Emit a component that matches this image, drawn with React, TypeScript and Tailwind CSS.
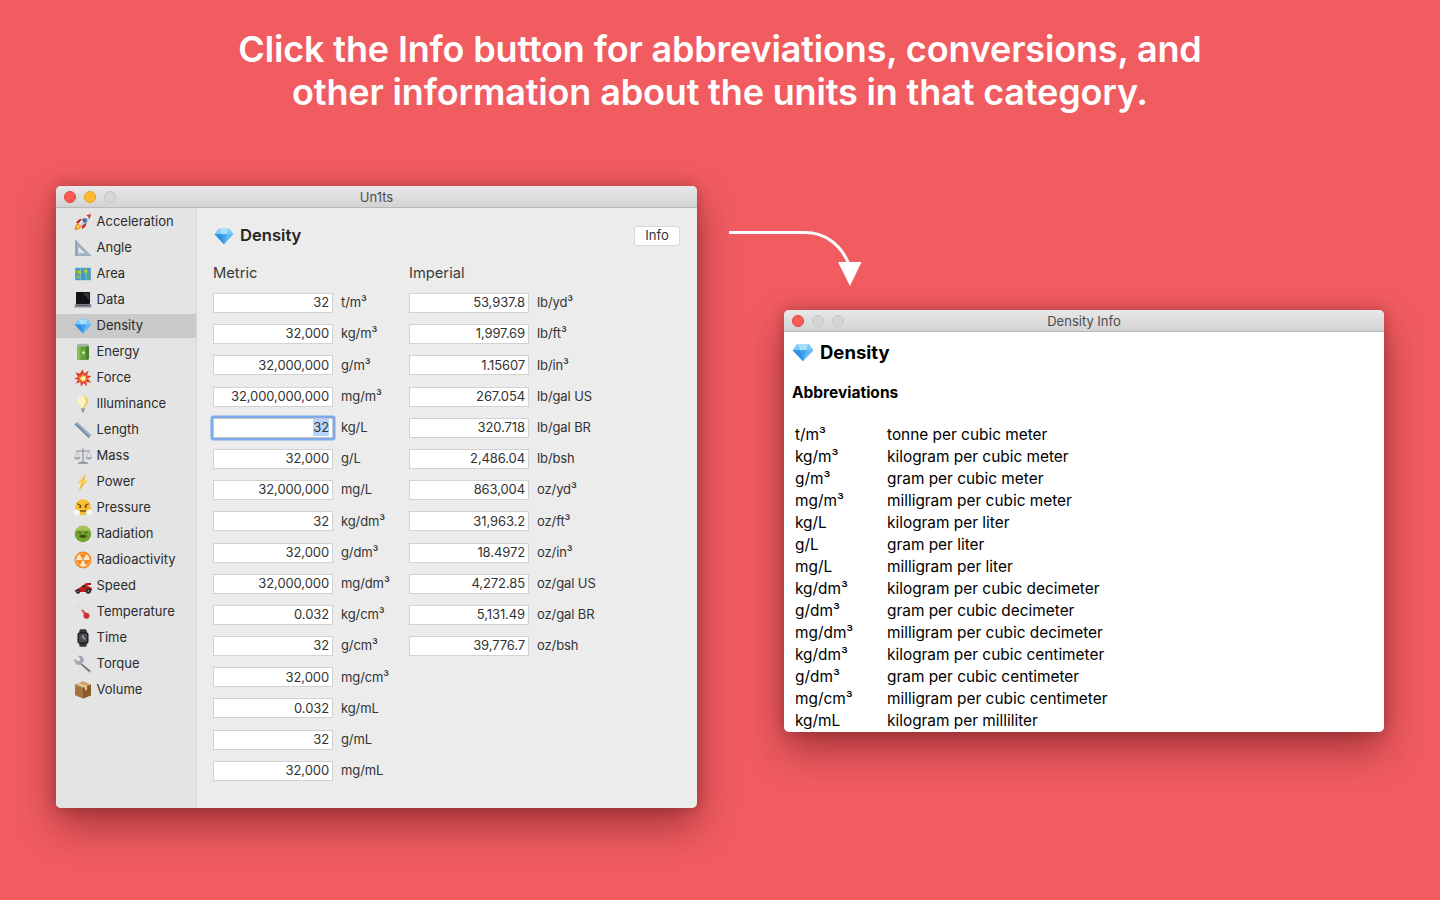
import type { ReactNode } from 'react'

const Svg = ({ children, size = 18 }: { children: ReactNode; size?: number }) => (
  <svg width={size} height={size} viewBox="0 0 18 18" className="shrink-0">
    {children}
  </svg>
)

const Diamond = ({ size = 18 }: { size?: number }) => (
  <Svg size={size}>
    <path d="M4.500 2.500h9l4 5L9 16.500.5 7.500z" fill="#5db8f5" />
    <path d="M4.500 2.500h9l-2 5h-5z" fill="#a5e0fd" />
    <path d="M.5 7.500l4-5 2 5zM17.500 7.500l-4-5-2 5z" fill="#7acbf9" />
    <path d="M6.500 7.500h5L9 16.500z" fill="#3f9fec" />
    <path d="M.5 7.500h6L9 16.500z" fill="#2f8fe0" />
  </Svg>
)

const icons: Record<string, ReactNode> = {
  Acceleration: (
    <Svg>
      <path d="M.8 17c-.2-3.500 1-6 3.500-6.800l3 3C6.500 15.800 4 17.200.8 17z" fill="#f0881d" />
      <path d="M2.600 15.300c0-1.800.7-3 1.900-3.600l1.500 1.500c-.5 1.300-1.600 2-3.400 2.100z" fill="#fde047" />
      <path d="M4.300 10C6.500 5.500 11 1.800 17 1c-.7 6-4.500 10.500-9 12.800z" fill="#c4cad3" />
      <path d="M4.300 10C6.500 5.500 11 1.800 17 1L6 12z" fill="#e8ebef" />
      <path d="M12 2.300c1.300.3 3.200 2.200 3.700 3.700L17 1z" fill="#d8342c" />
      <circle cx="10.700" cy="7.300" r="1.900" fill="#2f6fb5" stroke="#5b6472" strokeWidth=".7" />
      <path d="M4.800 6.500 8.500 5.800 4.500 10.500 1.800 10zM11.700 13l.8-3.700-4.700 4 .6 3z" fill="#c62a26" />
    </Svg>
  ),
  Angle: (
    <Svg>
      <path fillRule="evenodd" d="M1.500.8V17h16.200zM4.300 7.500V14.300h6.800z" fill="#9fb0c4" />
      <path d="M1.500.8V17h1.200V2.200z" fill="#7f92aa" />
    </Svg>
  ),
  Area: (
    <Svg>
      <rect x=".5" y="2" width="17" height="14" fill="#dfe6ea" />
      <rect x="1.200" y="2.800" width="15.600" height="12.400" fill="#3f9cc4" />
      <path d="M2 5h4.500l1.500 2.500-2 3.500-1.500-1.500L2 8zM9 4l5.500.5-.5 3.500-2.500 3-1-3-1.500-1zM13 11l2.800-.5-.5 3-2.300.5z" fill="#7fae42" />
      <path d="M4 6.500l2 .8M10.500 5.500l2.500 1.500M3.500 11l1.500 2" stroke="#f0c93f" strokeWidth="1.300" />
      <path d="M6.500 2.800v12.400M12 2.800v12.400" stroke="#ffffff" strokeOpacity=".35" strokeWidth=".8" />
    </Svg>
  ),
  Data: (
    <Svg>
      <rect x="2" y="1" width="14" height="12" rx=".8" fill="#111216" />
      <path d="M9 2h6v7z" fill="#33363d" />
      <path d="M1 13h16l.8 3.500H.2z" fill="#8e9097" />
      <rect x="2.300" y="13.700" width="13.400" height="1.300" fill="#55575e" />
    </Svg>
  ),
  Density: <Diamond />,
  Energy: (
    <Svg>
      <rect x="3" y="2" width="12" height="15" rx="1.800" fill="#639f38" />
      <rect x="3" y="2.500" width="3.500" height="14.300" rx="1.200" fill="#84bf52" />
      <rect x="3.600" y=".8" width="10.800" height="2.700" rx="1" fill="#a9b3a5" />
      <rect x="12" y="3.500" width="3" height="13" rx="1" fill="#4a7e29" />
      <path d="M9.700 6.500 7.700 10h1.600l-.8 3 2.600-4H9.500z" fill="#e4f3d8" />
    </Svg>
  ),
  Force: (
    <Svg>
      <path d="m8.500.3 1.800 4.200 4.300-3-1.500 5 4.400.6-3.600 2.600 3.300 4-4.800-.8.300 4.600-3.200-3.600-2.500 3.800-.7-4.800-4.600 1.800 2.300-4.200L0 9.700l4-2L1.300 3.500 5.800 4.500z" fill="#e0432f" />
      <path d="m9 5 1 2.200 2.500-.9-.8 2.500 2.100 1.300-2.600.6.400 2.500-2.100-1.500-1.600 2.100-.4-2.700-2.600.6 1.300-2.100-2-1.600 2.700-.2z" fill="#fbbf3a" />
      <circle cx="9.300" cy="9.500" r="1.900" fill="#fff3c4" />
    </Svg>
  ),
  Illuminance: (
    <Svg>
      <path d="M9 .8a5.300 5.300 0 0 0-3.200 9.500c.8.700 1.200 1.400 1.200 2.400h4c0-1 .4-1.700 1.200-2.400A5.300 5.300 0 0 0 9 .8z" fill="#fdf3c0" />
      <path d="M9 .8a5.300 5.300 0 0 1 3.200 9.500c-.8.700-1.200 1.400-1.200 2.400H9.500c0-3 2.700-3.700 2.200-7.200C11.400 3.400 10.300 1.700 9 .8z" fill="#f0cd62" />
      <rect x="7" y="12.800" width="4" height="3" rx=".8" fill="#a6a6a6" />
      <path d="M8 15.800h2l-.5 1.400h-1z" fill="#6f6f6f" />
    </Svg>
  ),
  Length: (
    <Svg>
      <path d="M3 .8 17.300 14l-2.500 3L.6 3.600z" fill="#93aac0" />
      <path d="M.6 3.600 14.800 17l.9-1.100L1.700 2.400z" fill="#6f879f" />
      <path d="m5 2.800 1.200-1.200M8 5.600l1.200-1.200M11 8.400l1.200-1.200M14 11.200l1.200-1.200" stroke="#dfe7ee" strokeWidth=".7" />
    </Svg>
  ),
  Mass: (
    <Svg>
      <path d="M9 1.500v13" stroke="#8d96a2" strokeWidth="1.300" />
      <path d="M2 4h14" stroke="#8d96a2" strokeWidth="1.100" />
      <path d="M3.300 4 .8 10.500h5zM14.700 4l-2.500 6.500h5z" fill="none" stroke="#a3abb5" strokeWidth=".6" />
      <path d="M.3 10.300h6a3 2.300 0 0 1-6 0zM11.700 10.300h6a3 2.300 0 0 1-6 0z" fill="#a0a9b5" />
      <path d="M3.500 16.800c0-1.500 2.300-2.400 5.500-2.400s5.500.9 5.500 2.400z" fill="#87919e" />
    </Svg>
  ),
  Power: (
    <Svg>
      <path d="M12 .5 3.500 10.300h4.300L5 17.500l9.300-10H9.800z" fill="#f9cf58" />
      <path d="M12 .5 8 7.500h1.800zM7.800 10.300 5 17.500l4.200-5.200z" fill="#f4a534" />
    </Svg>
  ),
  Pressure: (
    <Svg>
      <circle cx="9" cy="8.300" r="8" fill="#f9bf35" />
      <path d="M3.300 4.800 7.300 6.700M14.700 4.800l-4 1.900" stroke="#6b4a12" strokeWidth="1.100" />
      <circle cx="6.200" cy="8" r="1.100" fill="#5a3b0c" />
      <circle cx="11.800" cy="8" r="1.100" fill="#5a3b0c" />
      <path d="M6 12h6" stroke="#5a3b0c" strokeWidth="1.200" />
      <path d="M0 12.500c1-2.300 3.500-2.300 4.500-1 1.700.3 2 2.500.8 3.700-1.200 1.500-4.300 1.500-5.300-.2zM18 12.500c-1-2.300-3.500-2.300-4.500-1-1.700.3-2 2.500-.8 3.700 1.200 1.500 4.300 1.500 5.300-.2z" fill="#f4f6f8" />
    </Svg>
  ),
  Radiation: (
    <Svg>
      <circle cx="9" cy="9" r="8.200" fill="#74a332" />
      <path d="M9 .8a8.200 8.200 0 0 1 7.400 4.700H1.600A8.200 8.200 0 0 1 9 .8z" fill="#a7c45a" />
      <path d="m4.500 7 2.700 1.300M13.500 7l-2.700 1.300" stroke="#3c5318" strokeWidth="1.100" />
      <path d="M5 11c2-1.600 6-1.600 8 0-1 2.600-7 2.600-8 0z" fill="#3c5318" />
    </Svg>
  ),
  Radioactivity: (
    <Svg>
      <circle cx="9" cy="9" r="8.500" fill="#f58a1f" />
      <circle cx="9" cy="9" r="6.800" fill="#fde9cf" />
      <path d="M9 9 5.800 3.500a6.300 6.300 0 0 1 6.400 0zM9 9h6.300a6.300 6.300 0 0 1-3.100 5.500zM9 9l-3.200 5.500A6.300 6.300 0 0 1 2.700 9z" fill="#f58a1f" />
      <circle cx="9" cy="9" r="1.600" fill="#fde9cf" />
      <circle cx="9" cy="9" r="1" fill="#f58a1f" />
    </Svg>
  ),
  Speed: (
    <Svg>
      <path d="M0 14 5 11l4-2.500 2-2h2.500v2.300l4.500 2.200v2.500L14 15H5z" fill="#c8201f" />
      <rect x="12.500" y="6" width="4.500" height="2" fill="#a31718" />
      <rect x="8" y="8.500" width="3" height="2" rx=".5" fill="#2b2b2b" />
      <circle cx="4" cy="14.500" r="2.300" fill="#2a2a2c" />
      <circle cx="14.300" cy="14" r="2.700" fill="#2a2a2c" />
      <circle cx="14.300" cy="14" r=".9" fill="#8a8a8a" />
      <circle cx="4" cy="14.500" r=".8" fill="#8a8a8a" />
    </Svg>
  ),
  Temperature: (
    <Svg>
      <path d="m2 2.500 1.400-1.400L12 10l-1.700 1.700z" fill="#e6e6e9" stroke="#bdbdc2" strokeWidth=".4" />
      <path d="m7.500 7.500 1-1 4 4-1.500 1.500z" fill="#cf3a3a" />
      <circle cx="12.500" cy="12.800" r="3" fill="#c92f34" />
    </Svg>
  ),
  Time: (
    <Svg>
      <rect x="5.300" y=".3" width="7.400" height="17.400" rx="1.500" fill="#35363a" />
      <rect x="3.500" y="3.200" width="11" height="11.600" rx="2.500" fill="#17171a" />
      <rect x="4.800" y="4.500" width="8.400" height="9" rx="1.200" fill="#4a4c52" />
      <path d="M9 9V6M9 9l2.200 1.100" stroke="#e5e7eb" strokeWidth=".8" />
    </Svg>
  ),
  Torque: (
    <Svg>
      <path d="m6.500 7.500 10 8c.9 1.100-.5 2.500-1.600 1.600L5.800 8.800z" fill="#6f7680" />
      <path d="M6.700 9.600A4.400 4.400 0 0 1 .9 3.800l2.800 2.500 2.100-.5.500-2.100L3.800 1A4.400 4.400 0 0 1 9.600 6.700z" fill="#a2a9b3" />
      <circle cx="15.700" cy="16.300" r=".6" fill="#d1d5db" />
    </Svg>
  ),
  Volume: (
    <Svg>
      <path d="M9 .5 17 3.800v10.500L9 17.500 1 14.300V3.800z" fill="#a6743d" />
      <path d="M9 .5 17 3.800 9 7 1 3.800z" fill="#d1a26a" />
      <path d="M9 7v10.500l8-3.200V3.800z" fill="#8a5a2b" />
      <path d="m5 2.200 8 3.200v3.200l-2 .8V6.200L3 3z" fill="#ecd6ac" />
    </Svg>
  ),
}

const categories = [
  'Acceleration', 'Angle', 'Area', 'Data', 'Density', 'Energy', 'Force', 'Illuminance', 'Length', 'Mass',
  'Power', 'Pressure', 'Radiation', 'Radioactivity', 'Speed', 'Temperature', 'Time', 'Torque', 'Volume',
]

const metric = [
  ['32', 't/m³'], ['32,000', 'kg/m³'], ['32,000,000', 'g/m³'], ['32,000,000,000', 'mg/m³'], ['32', 'kg/L'],
  ['32,000', 'g/L'], ['32,000,000', 'mg/L'], ['32', 'kg/dm³'], ['32,000', 'g/dm³'], ['32,000,000', 'mg/dm³'],
  ['0.032', 'kg/cm³'], ['32', 'g/cm³'], ['32,000', 'mg/cm³'], ['0.032', 'kg/mL'], ['32', 'g/mL'], ['32,000', 'mg/mL'],
]

const imperial = [
  ['53,937.8', 'lb/yd³'], ['1,997.69', 'lb/ft³'], ['1.15607', 'lb/in³'], ['267.054', 'lb/gal US'],
  ['320.718', 'lb/gal BR'], ['2,486.04', 'lb/bsh'], ['863,004', 'oz/yd³'], ['31,963.2', 'oz/ft³'],
  ['18.4972', 'oz/in³'], ['4,272.85', 'oz/gal US'], ['5,131.49', 'oz/gal BR'], ['39,776.7', 'oz/bsh'],
]

const abbreviations = [
  ['t/m³', 'tonne per cubic meter'], ['kg/m³', 'kilogram per cubic meter'], ['g/m³', 'gram per cubic meter'],
  ['mg/m³', 'milligram per cubic meter'], ['kg/L', 'kilogram per liter'], ['g/L', 'gram per liter'],
  ['mg/L', 'milligram per liter'], ['kg/dm³', 'kilogram per cubic decimeter'], ['g/dm³', 'gram per cubic decimeter'],
  ['mg/dm³', 'milligram per cubic decimeter'], ['kg/dm³', 'kilogram per cubic centimeter'],
  ['g/dm³', 'gram per cubic centimeter'], ['mg/cm³', 'milligram per cubic centimeter'], ['kg/mL', 'kilogram per milliliter'],
]

function TitleBar({ title, lights }: { title: string; lights: string[] }) {
  return (
    <div className="relative flex h-[22px] shrink-0 items-center justify-center border-b border-[#b9b9b9] bg-gradient-to-b from-[#e8e8e8] to-[#d3d3d3] pt-[2px] text-[13px] text-[#4c4c4c]">
      <div className="absolute left-2 top-[5px] flex gap-2">
        {lights.map((c, i) => (
          <span key={i} className={`h-3 w-3 rounded-full border ${c}`} />
        ))}
      </div>
      {title}
    </div>
  )
}

function Field({ value, unit, focused }: { value: string; unit: string; focused?: boolean }) {
  return (
    <div className="flex h-5 items-center tracking-[-0.1px]">
      <div
        className={
          focused
            ? 'flex h-5 w-[120px] items-center justify-end rounded-[1px] border border-[#c8c8c8] bg-white pr-[3px] shadow-[0_0_0_2.5px_#7fa9ec]'
            : 'flex h-5 w-[120px] items-center justify-end border border-[#d2d2d2] bg-white pr-[3px]'
        }
      >
        <span className={focused ? 'bg-[#b3d7ff] leading-[17px]' : ''}>{value}</span>
      </div>
      <span className="ml-2">{unit}</span>
    </div>
  )
}

function Column({ title, rows, focusedRow }: { title: string; rows: string[][]; focusedRow?: number }) {
  return (
    <div className="w-[196px]">
      <div className="mb-[10px] h-[20px] text-[14.7px] leading-[20px] text-[#3a3a3a]">{title}</div>
      <div className="flex flex-col gap-[11.2px]">
        {rows.map(([value, unit], i) => (
          <Field key={unit} value={value} unit={unit} focused={i === focusedRow} />
        ))}
      </div>
    </div>
  )
}

function UnitsWindow() {
  return (
    <div className="absolute left-[56px] top-[186px] flex h-[622px] w-[641px] flex-col overflow-hidden rounded-[5px] bg-[#ececec] shadow-[0_0_14px_rgba(60,0,0,0.25),0_18px_40px_rgba(60,0,0,0.42)]">
      <TitleBar
        title="Un1ts"
        lights={['border-[#e0443e] bg-[#fc5b57]', 'border-[#dea123] bg-[#fdbb2e]', 'border-[#c6c6c6] bg-[#d6d6d6]']}
      />
      <div className="flex min-h-0 flex-1">
        <aside className="w-[141px] shrink-0 border-r border-[#d6d6d6] bg-[#e4e4e4] pt-[1px]">
          {categories.map((name) => (
            <div key={name} className="flex h-[26px] items-center">
              <div
                className={
                  name === 'Density'
                    ? 'flex h-6 w-full items-center gap-[4.5px] bg-[#c9c9c9] pl-[18px] text-[13px] text-[#2b2b2b]'
                    : 'flex h-6 w-full items-center gap-[4.5px] pl-[18px] text-[13px] text-[#2b2b2b]'
                }
              >
                {icons[name]}
                <span>{name}</span>
              </div>
            </div>
          ))}
        </aside>
        <main className="min-w-0 flex-1 pl-4 pr-4 pt-[15px] text-[13px] text-[#333333]">
          <div className="mb-4 flex h-[24px] items-center">
            <span className="ml-[1px] mt-[1px]">
              <Diamond size={20} />
            </span>
            <h2 className="ml-[6px] mt-[1px] text-[16.6px] font-semibold text-[#262626]">Density</h2>
            <button className="ml-auto mr-[1px] mt-[1px] flex h-5 w-[46px] items-center justify-center rounded-[3px] border border-[#d8d8d8] bg-white text-[13px] text-[#333333]">
              Info
            </button>
          </div>
          <div className="flex">
            <Column title="Metric" rows={metric} focusedRow={4} />
            <Column title="Imperial" rows={imperial} />
          </div>
        </main>
      </div>
    </div>
  )
}

function InfoWindow() {
  return (
    <div className="absolute left-[784px] top-[310px] flex h-[422px] w-[600px] flex-col overflow-hidden rounded-[5px] bg-white shadow-[0_0_14px_rgba(60,0,0,0.25),0_18px_40px_rgba(60,0,0,0.42)]">
      <TitleBar
        title="Density Info"
        lights={['border-[#e0443e] bg-[#fc5b57]', 'border-[#c6c6c6] bg-[#d6d6d6]', 'border-[#c6c6c6] bg-[#d6d6d6]']}
      />
      <div className="min-h-0 flex-1 overflow-hidden pl-2 pt-[7px] text-[15.4px] leading-[22px] text-black">
        <div className="flex h-[26px] items-center">
          <Diamond size={22} />
          <h1 className="ml-[6px] text-[18.5px] font-bold">Density</h1>
        </div>
        <h3 className="mt-[17px] text-[15.5px] font-bold">Abbreviations</h3>
        <div className="mt-[20px] pl-[3px]">
          {abbreviations.map(([abbr, name]) => (
            <div key={name} className="flex h-[22px] items-center">
              <span className="w-[92px] shrink-0">{abbr}</span>
              <span>{name}</span>
            </div>
          ))}
        </div>
      </div>
    </div>
  )
}

export default function App() {
  return (
    <div className="relative h-[900px] w-[1440px] overflow-hidden bg-[#f15c61] font-['Inter',sans-serif]">
      <h1 className="pt-[28px] text-center text-[36px] font-semibold leading-[43px] tracking-[-0.15px] text-white">
        Click the Info button for abbreviations, conversions, and
        <br />
        other information about the units in that category.
      </h1>
      <UnitsWindow />
      <svg width="140" height="60" viewBox="0 0 140 60" className="absolute left-[725px] top-[228px]">
        <path d="M4 4.500h76c20 0 36 12 44 32" fill="none" stroke="white" strokeWidth="3" />
        <path d="M113 34h23.500l-11.500 24z" fill="white" />
      </svg>
      <InfoWindow />
    </div>
  )
}
